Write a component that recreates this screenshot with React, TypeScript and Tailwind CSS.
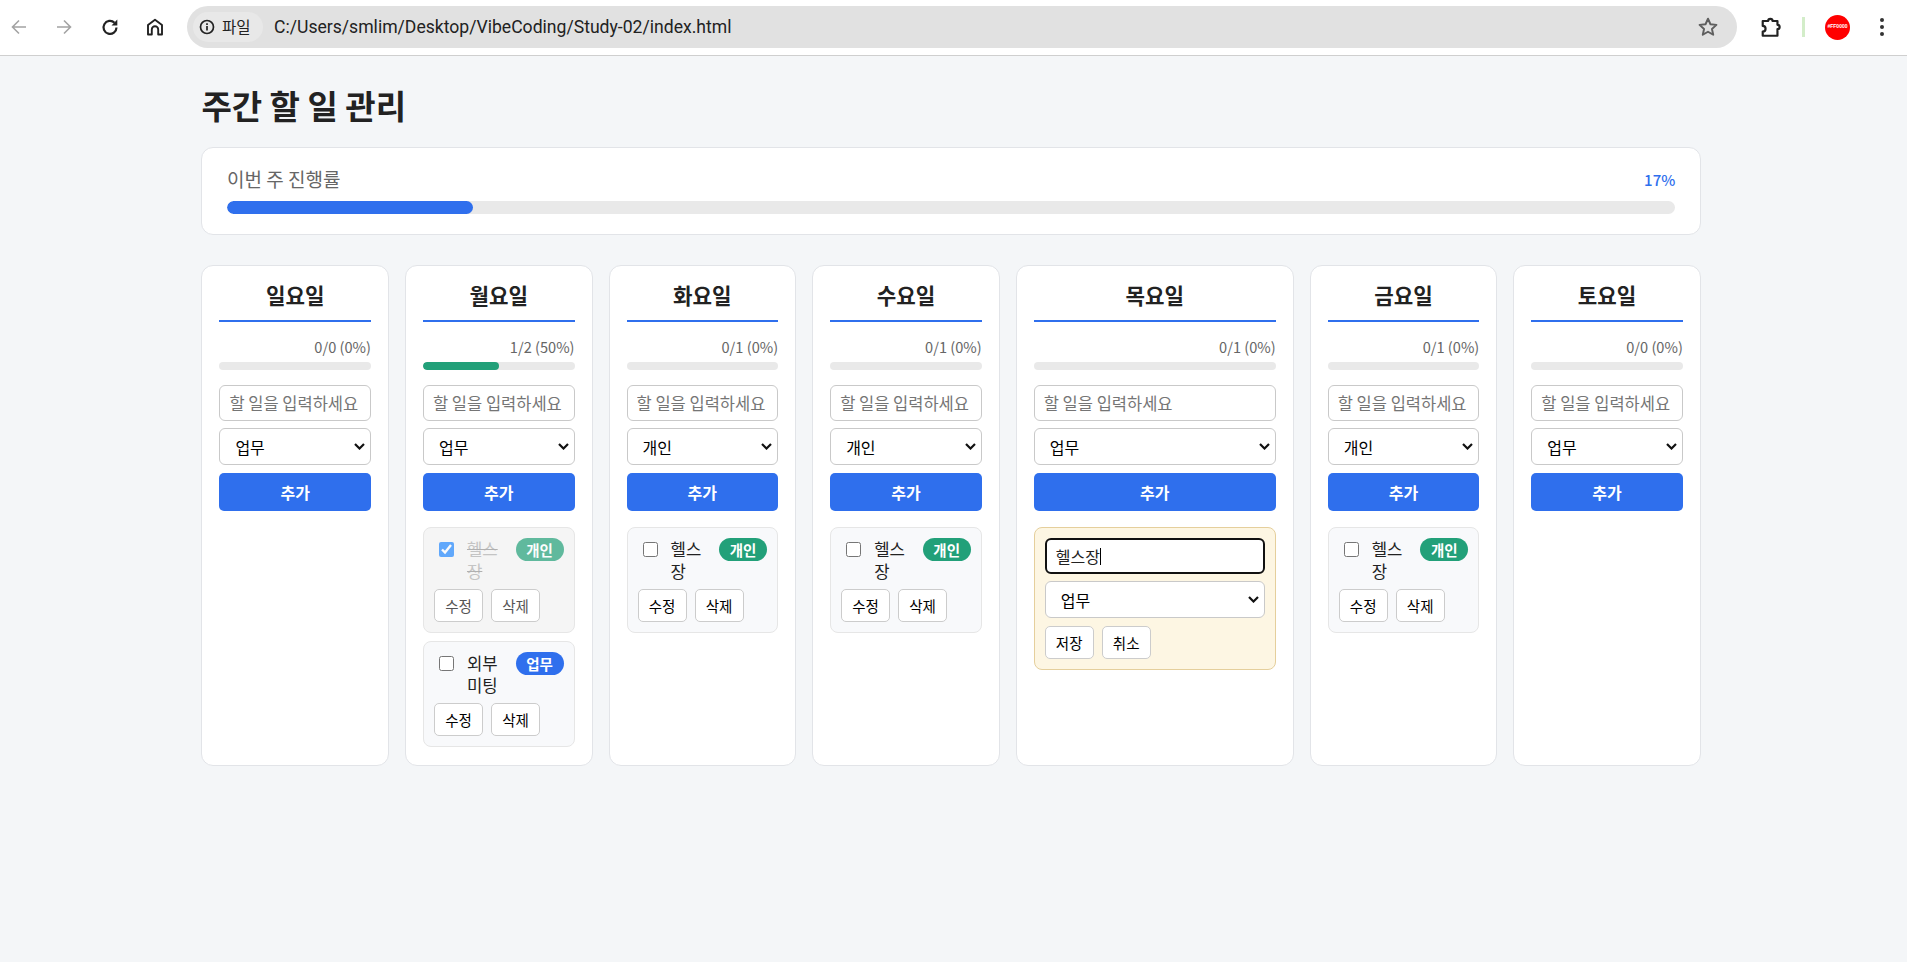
import React from "react";

const FONT = "font-['Noto_Sans_CJK_KR','Noto_Sans',sans-serif]";

type Task = { text: string; cat: "개인" | "업무"; done?: boolean };
type Day = {
  name: string;
  stat: string;
  pct: number;
  sel: string;
  tasks: Task[];
  editing?: boolean;
};

const DAYS: Day[] = [
  { name: "일요일", stat: "0/0 (0%)", pct: 0, sel: "업무", tasks: [] },
  {
    name: "월요일",
    stat: "1/2 (50%)",
    pct: 50,
    sel: "업무",
    tasks: [
      { text: "헬스장", cat: "개인", done: true },
      { text: "외부 미팅", cat: "업무" },
    ],
  },
  { name: "화요일", stat: "0/1 (0%)", pct: 0, sel: "개인", tasks: [{ text: "헬스장", cat: "개인" }] },
  { name: "수요일", stat: "0/1 (0%)", pct: 0, sel: "개인", tasks: [{ text: "헬스장", cat: "개인" }] },
  { name: "목요일", stat: "0/1 (0%)", pct: 0, sel: "업무", tasks: [], editing: true },
  { name: "금요일", stat: "0/1 (0%)", pct: 0, sel: "개인", tasks: [{ text: "헬스장", cat: "개인" }] },
  { name: "토요일", stat: "0/0 (0%)", pct: 0, sel: "업무", tasks: [] },
];

function Select({ value }: { value: string }) {
  return (
    <div className="relative">
      <select
        defaultValue={value}
        className="block h-[37px] w-full appearance-none rounded-[6px] border border-[#c9c9c9] bg-white px-[15px] text-[16px] text-black"
      >
        <option>업무</option>
        <option>개인</option>
      </select>
      <svg
        className="pointer-events-none absolute top-[15px] right-[6px]"
        width="11"
        height="7"
        viewBox="0 0 11 7"
        fill="none"
        stroke="#111"
        strokeWidth="2.200"
      >
        <path d="M1 1l4.500 4.500L10 1" />
      </svg>
    </div>
  );
}

function SmallButton({ label, muted }: { label: string; muted?: boolean }) {
  return (
    <button
      className={`h-[33px] w-[49px] rounded-[5px] border border-[#cccccc] bg-white text-[14.5px] ${muted ? "text-[#555]" : "text-black"}`}
    >
      {label}
    </button>
  );
}

function TaskCard({ task }: { task: Task }) {
  const badge = task.cat === "개인" ? "bg-[#22a079]" : "bg-[#2f6fed]";
  return (
    <div
      className={`flex flex-col gap-[7px] rounded-[8px] border border-[#e6e6e6] p-[10px] ${task.done ? "bg-[#f5f5f5]" : "bg-[#f8f9fb]"}`}
    >
      <div className="flex items-start">
        <input
          type="checkbox"
          defaultChecked={task.done}
          className={`ml-[5px] mr-[13px] mt-[4px] h-[15px] w-[15px] shrink-0 ${task.done ? "opacity-60" : ""}`}
        />
        <span
          className={`min-w-0 flex-1 pr-[8px] text-[16.7px] leading-[22px] ${task.done ? "text-[#c4c4c4] line-through decoration-[#b0b0b0]" : "text-[#222]"}`}
        >
          {task.text}
        </span>
        <span
          className={`flex h-[23px] w-[48px] shrink-0 items-center justify-center rounded-full text-[14.5px] font-bold text-white ${badge} ${task.done ? "opacity-70" : ""}`}
        >
          {task.cat}
        </span>
      </div>
      <div className="flex gap-[8px]">
        <SmallButton label="수정" muted={task.done} />
        <SmallButton label="삭제" muted={task.done} />
      </div>
    </div>
  );
}

function EditCard() {
  return (
    <div className="flex flex-col rounded-[8px] border border-[#e5cf9c] bg-[#fdf6e3] p-[10px]">
      <div className="relative">
        <input
          defaultValue="헬스장"
          className="h-[36px] w-full rounded-[6px] border-2 border-[#111] bg-white px-[9px] text-[16px] text-[#222] outline-none"
        />
        <div className="absolute top-[10px] left-[55px] h-[17px] w-[1px] bg-black" />
      </div>
      <div className="mt-[7px]">
        <Select value="업무" />
      </div>
      <div className="mt-[8px] flex gap-[8px]">
        <SmallButton label="저장" />
        <SmallButton label="취소" />
      </div>
    </div>
  );
}

function DayColumn({ day }: { day: Day }) {
  return (
    <div
      className={`flex h-[501px] flex-col rounded-[12px] border border-[#e2e4e8] bg-white px-[17px] pt-[14px] ${day.editing ? "w-[278px] shrink-0" : "min-w-0 flex-1"}`}
    >
      <h2 className="h-[42px] border-b-2 border-[#2f6fed] text-center text-[21.2px] leading-[30px] font-bold text-[#222]">
        {day.name}
      </h2>
      <div className="mt-[16px] text-right text-[14.6px] leading-[18px] text-[#666]">{day.stat}</div>
      <div className="mt-[6px] h-[8px] overflow-hidden rounded-full bg-[#e9e9e9]">
        <div className="h-full rounded-full bg-[#22a079]" style={{ width: `${day.pct}%` }} />
      </div>
      <input
        placeholder="할 일을 입력하세요"
        className="mt-[15px] h-[36px] w-full rounded-[6px] border border-[#c9c9c9] bg-white px-[9px] text-[16.5px] text-black placeholder:text-[#757575]"
      />
      <div className="mt-[7px]">
        <Select value={day.sel} />
      </div>
      <button className="mt-[8px] h-[38px] w-full shrink-0 rounded-[5px] bg-[#2f6fed] text-[16px] font-bold text-white">
        추가
      </button>
      <div className="mt-[16px] flex flex-col gap-[8px]">
        {day.editing && <EditCard />}
        {day.tasks.map((t, i) => (
          <TaskCard key={i} task={t} />
        ))}
      </div>
    </div>
  );
}

function Toolbar() {
  return (
    <div className="flex h-[56px] items-center border-b border-[#cfcfcf] bg-white pb-[1px]">
      <div className="flex w-[187px] items-center pl-[9px]">
        <svg width="20" height="20" viewBox="0 0 20 20" fill="none" stroke="#a3a3a3" strokeWidth="1.6">
          <path d="M17 10H4M10 3.5 3.5 10l6.5 6.5" />
        </svg>
        <svg className="ml-[25px]" width="20" height="20" viewBox="0 0 20 20" fill="none" stroke="#a3a3a3" strokeWidth="1.6">
          <path d="M3 10h13M10 3.5l6.5 6.5-6.5 6.5" />
        </svg>
        <svg className="ml-[26px]" width="20" height="20" viewBox="0 0 20 20" fill="none" stroke="#222" strokeWidth="2.2">
          <path d="M16.500 10.500a6.500 6.500 0 1 1-2-4.800" />
          <path d="M17.300 2.600v5.800h-5.800" fill="#222" stroke="none" />
        </svg>
        <svg className="ml-[25px]" width="20" height="20" viewBox="0 0 20 20" fill="none" stroke="#222" strokeWidth="1.900">
          <path d="M3 17.500V8L10 2.800 17 8v9.500h-3.800v-5a3.200 3.200 0 0 0-6.400 0v5Z" strokeLinejoin="round" />
        </svg>
      </div>
      <div className="flex h-[42px] w-[1550px] items-center rounded-full bg-[#e1e1e1] pl-[6px] pr-[18px]">
        <div className="flex h-[30px] w-[70px] items-center gap-[7px] rounded-full bg-[#e8e8e8] pl-[6px]">
          <svg width="16" height="16" viewBox="0 0 16 16" fill="none" stroke="#222" strokeWidth="1.700">
            <circle cx="8" cy="8" r="6.500" />
            <path d="M8 7v4.500M8 4.300v1.700" />
          </svg>
          <span className="text-[15.5px] text-[#222]">파일</span>
        </div>
        <span className="ml-[11px] flex-1 font-['Roboto',sans-serif] text-[17.6px] text-[#222]">
          C:/Users/smlim/Desktop/VibeCoding/Study-02/index.html
        </span>
        <svg width="22" height="22" viewBox="0 0 24 24" fill="none" stroke="#5f5f5f" strokeWidth="2.100">
          <path d="m12 3 2.700 6 6.500.7-4.900 4.400 1.400 6.400L12 17.200l-5.700 3.300 1.400-6.400-4.900-4.400 6.500-.7Z" strokeLinejoin="round" />
        </svg>
      </div>
      <svg className="ml-[23px]" width="24" height="24" viewBox="0 0 22 22" fill="none" stroke="#222" strokeWidth="2" strokeLinejoin="round">
        <path d="M2.500 5.500H7.500a2 2 0 0 1 4 0H16V9a2 2 0 0 1 0 4v6H2.500v-3.800a2.600 2.600 0 0 0 0-5.200Z" />
      </svg>
      <div className="ml-[18px] h-[20px] w-[3px] bg-[#d3edc9]" />
      <div className="ml-[20px] flex h-[25px] w-[25px] items-center justify-center overflow-hidden rounded-full bg-[#ff0000] font-['Liberation_Sans',sans-serif] text-[5px] font-bold text-white">
        #FF0000
      </div>
      <div className="ml-[30px] flex flex-col gap-[3px]">
        <div className="h-[4px] w-[4px] rounded-full bg-[#333]" />
        <div className="h-[4px] w-[4px] rounded-full bg-[#333]" />
        <div className="h-[4px] w-[4px] rounded-full bg-[#333]" />
      </div>
    </div>
  );
}

export default function App() {
  return (
    <div className={`min-h-[962px] bg-[#f4f6f8] ${FONT}`}>
      <Toolbar />
      <div className="ml-[201.400px] w-[1499.500px]">
        <h1 className="pt-[29px] text-[33px] leading-[40px] font-bold text-[#222]">주간 할 일 관리</h1>
        <div className="mt-[22px] h-[88px] rounded-[12px] border border-[#e2e4e8] bg-white px-[24.600px] pt-[18px]">
          <div className="flex h-[24px] items-end justify-between">
            <span className="translate-y-[1px] text-[19px] leading-[24px] text-[#666]">이번 주 진행률</span>
            <span className="translate-y-[1px] text-[15px] leading-[22px] font-medium text-[#2f6fed]">17%</span>
          </div>
          <div className="mt-[11px] h-[13px] overflow-hidden rounded-full bg-[#e9e9e9]">
            <div className="h-full rounded-full bg-[#2f6fed]" style={{ width: "17%" }} />
          </div>
        </div>
        <div className="mt-[30px] flex gap-[16px]">
          {DAYS.map((d) => (
            <DayColumn key={d.name} day={d} />
          ))}
        </div>
      </div>
    </div>
  );
}
